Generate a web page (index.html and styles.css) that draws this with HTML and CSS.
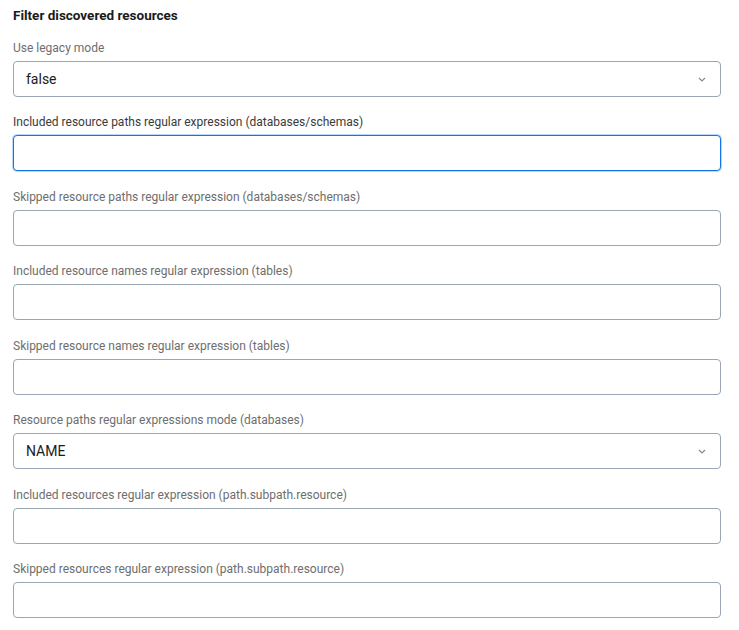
FILE: index.html
```html
<!DOCTYPE html>
<html lang="en">
<head>
<meta charset="utf-8">
<title>Filter discovered resources</title>
<link rel="stylesheet" href="styles.css">
</head>
<body>
<section class="panel">
  <h2 class="title">Filter discovered resources</h2>
  <div class="field">
    <label class="label">Use legacy mode</label>
    <div class="select"><span>false</span><svg class="chev" width="8" height="5" viewBox="0 0 8 5"><path d="M1 1 L4 4 L7 1" fill="none" stroke="#7d8b9c" stroke-width="1.2"/></svg></div>
  </div>
  <div class="field">
    <label class="label label-dark">Included resource paths regular expression (databases/schemas)</label>
    <div class="input focused"></div>
  </div>
  <div class="field">
    <label class="label">Skipped resource paths regular expression (databases/schemas)</label>
    <div class="input"></div>
  </div>
  <div class="field">
    <label class="label">Included resource names regular expression (tables)</label>
    <div class="input"></div>
  </div>
  <div class="field">
    <label class="label">Skipped resource names regular expression (tables)</label>
    <div class="input"></div>
  </div>
  <div class="field">
    <label class="label">Resource paths regular expressions mode (databases)</label>
    <div class="select"><span>NAME</span><svg class="chev" width="8" height="5" viewBox="0 0 8 5"><path d="M1 1 L4 4 L7 1" fill="none" stroke="#7d8b9c" stroke-width="1.2"/></svg></div>
  </div>
  <div class="field">
    <label class="label">Included resources regular expression (path.subpath.resource)</label>
    <div class="input"></div>
  </div>
  <div class="field">
    <label class="label">Skipped resources regular expression (path.subpath.resource)</label>
    <div class="input"></div>
  </div>
</section>
</body>
</html>
```
FILE: styles.css
```css
* { box-sizing: border-box; }
html, body { margin: 0; padding: 0; background: #ffffff; }
body { font-family: Roboto, "Liberation Sans", sans-serif; color: #1c1c1c; }
.panel { padding: 7px 18px 0 13px; display: flex; flex-direction: column; }
.title { margin: 0 0 17px 0; font-size: 13.5px; font-weight: 700; line-height: 16px; color: #1a1a1a; }
.field { display: flex; flex-direction: column; margin-bottom: 17.43px; }
.label { font-size: 12px; line-height: 17px; color: #6e6e6e; margin-bottom: 4px; }
.label-dark { color: #3a3a3a; }
.input, .select { height: 36px; border: 1px solid #9aa6b4; border-radius: 4px; background: #fff; }
.select { display: flex; align-items: center; justify-content: space-between; padding: 0 14px 0 12px; font-size: 14px; color: #1b1b1b; }
.chev { display: block; }
.focused { border-color: #1473e6; box-shadow: 0 0 0 1px #b9d8fb; }
```
